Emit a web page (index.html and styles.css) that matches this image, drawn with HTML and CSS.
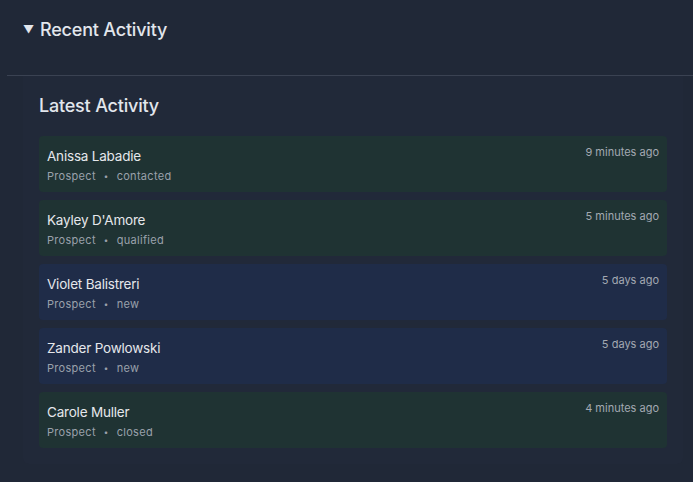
FILE: index.html
```html
<!DOCTYPE html>
<html>
<head>
<meta charset="utf-8">
<link rel="stylesheet" href="styles.css">
</head>
<body>
<section class="section">
  <div class="summary"><span class="caret">▼</span><span class="summary-title">Recent Activity</span></div>
  <div class="divider"></div>
  <div class="panel">
    <h2 class="panel-title">Latest Activity</h2>
    <ul class="list">
      <li class="item green">
        <div class="info"><div class="name">Anissa Labadie</div><div class="meta"><span>Prospect</span><span class="dot">•</span><span>contacted</span></div></div>
        <div class="time">9 minutes ago</div>
      </li>
      <li class="item green">
        <div class="info"><div class="name">Kayley D'Amore</div><div class="meta"><span>Prospect</span><span class="dot">•</span><span>qualified</span></div></div>
        <div class="time">5 minutes ago</div>
      </li>
      <li class="item blue">
        <div class="info"><div class="name">Violet Balistreri</div><div class="meta"><span>Prospect</span><span class="dot">•</span><span>new</span></div></div>
        <div class="time">5 days ago</div>
      </li>
      <li class="item blue">
        <div class="info"><div class="name">Zander Powlowski</div><div class="meta"><span>Prospect</span><span class="dot">•</span><span>new</span></div></div>
        <div class="time">5 days ago</div>
      </li>
      <li class="item green">
        <div class="info"><div class="name">Carole Muller</div><div class="meta"><span>Prospect</span><span class="dot">•</span><span>closed</span></div></div>
        <div class="time">4 minutes ago</div>
      </li>
    </ul>
  </div>
</section>
</body>
</html>
```
FILE: styles.css
```css
html, body {
  margin: 0;
  padding: 0;
  background: #202837;
  font-family: Inter, "Noto Sans", sans-serif;
  color: #e5e7eb;
}
.section {
  height: 482px;
}
.summary {
  display: flex;
  align-items: center;
  height: 58px;
  padding-left: 23px;
  color: #e2e6ec;
}
.caret {
  font-size: 11px;
  width: 17px;
  line-height: 1;
}
.summary-title {
  font-size: 18px;
  font-weight: 500;
  letter-spacing: -0.2px;
}
.divider {
  margin-left: 7px;
  margin-top: 17px;
  border-top: 1px solid #3a4252;
}
.panel {
  margin: 0 10px 0 23px;
  padding: 17px 16px 16px 16px;
  background: #212939;
  border-radius: 0 0 6px 6px;
}
.panel-title {
  margin: 0 0 17px 0;
  font-size: 18px;
  font-weight: 500;
  line-height: 26px;
  color: #e2e6ec;
  letter-spacing: -0.2px;
}
.list {
  list-style: none;
  margin: 0;
  padding: 0;
  display: flex;
  flex-direction: column;
  gap: 8px;
}
.item {
  height: 56px;
  box-sizing: border-box;
  border-radius: 4px;
  padding: 10px 8px 0 8px;
  display: flex;
  justify-content: space-between;
  align-items: flex-start;
}
.green { background: #1f3333; }
.blue { background: #1f2c48; }
.name {
  font-size: 13.5px;
  line-height: 20px;
  color: #e5e7eb;
  letter-spacing: -0.2px;
}
.meta {
  margin-top: 2px;
  font-size: 11px;
  line-height: 16px;
  color: #9aa1ab;
  display: flex;
  letter-spacing: 0.3px;
}
.dot {
  font-size: 8px;
  margin: 0 8px;
}
.time {
  font-size: 11px;
  line-height: 12px;
  color: #a3a9b2;
}
```
